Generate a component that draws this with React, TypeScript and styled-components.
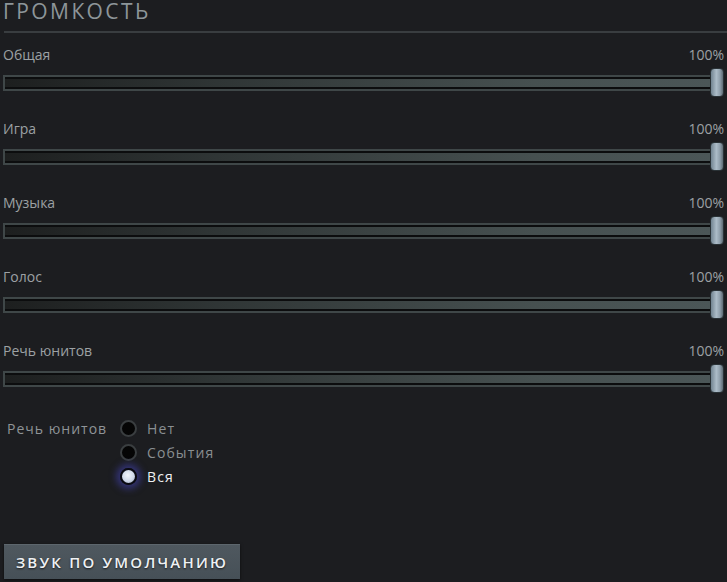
import React from "react";
import styled, { createGlobalStyle } from "styled-components";

const GlobalStyle = createGlobalStyle`
  html, body {
    margin: 0;
    padding: 0;
    background: #1c1d20;
  }
  body {
    font-family: "Open Sans", "Noto Sans", sans-serif;
    width: 727px;
    height: 582px;
    overflow: hidden;
  }
`;

const Page = styled.div`
  display: flex;
  flex-direction: column;
`;

const Header = styled.div`
  margin-left: 4px;
  height: 31px;
  border-bottom: 2px solid #393d40;
  display: flex;
  align-items: flex-start;
`;

const Title = styled.h1`
  margin: 0 0 0 -1px;
  font-size: 21px;
  font-weight: 400;
  letter-spacing: 2.4px;
  color: #8d9599;
  line-height: 22px;
`;

const Sliders = styled.div`
  display: flex;
  flex-direction: column;
  padding: 12px 3px 0 3px;
`;

const Row = styled.div`
  display: flex;
  flex-direction: column;
  height: 74px;
`;

const LabelLine = styled.div`
  display: flex;
  justify-content: space-between;
  align-items: center;
  height: 18px;
  font-size: 14px;
  color: #9ca1a4;
`;

const TrackArea = styled.div`
  position: relative;
  margin-top: 5px;
  height: 29px;
  display: flex;
  align-items: center;
`;

const Track = styled.div`
  flex: 1;
  height: 16px;
  box-sizing: border-box;
  border: 2px solid #3f4748;
  background: #0c0d0e;
  padding: 2px 0;
  margin-right: 12px;
`;

const Fill = styled.div`
  height: 100%;
  background: linear-gradient(90deg, #1d1f1f 0%, #2f3535 30%, #465050 75%, #4b5657 100%);
`;

const Thumb = styled.div`
  position: absolute;
  right: 0;
  top: 0;
  width: 14px;
  height: 29px;
  box-sizing: border-box;
  border-radius: 4px;
  border: 1px solid #2a3236;
  background: linear-gradient(90deg, #728491 0%, #acbcc8 45%, #8e9eaa 75%, #5e6b74 100%);
`;

const RadioSection = styled.div`
  display: flex;
  align-items: flex-start;
  margin-top: 1px;
  padding-left: 7px;
`;

const RadioLabel = styled.div`
  width: 113px;
  height: 24px;
  display: flex;
  align-items: center;
  font-size: 14px;
  letter-spacing: 1px;
  color: #8f9497;
`;

const Options = styled.div`
  display: flex;
  flex-direction: column;
`;

const Option = styled.div<{ $on?: boolean }>`
  display: flex;
  align-items: center;
  gap: 10px;
  height: 24px;
  font-size: 14px;
  letter-spacing: 1.1px;
  color: ${(p) => (p.$on ? "#eef0f2" : "#8a8f92")};
`;

const Dot = styled.span<{ $on?: boolean }>`
  width: 17px;
  height: 17px;
  box-sizing: border-box;
  border-radius: 50%;
  border: 2px solid ${(p) => (p.$on ? "#0a0a12" : "#3a3e40")};
  background: ${(p) =>
    p.$on ? "radial-gradient(circle at 45% 40%, #f2f5fb 0%, #cfd8e8 55%, #8e9ab4 100%)" : "#050505"};
  box-shadow: ${(p) => (p.$on ? "0 0 7px 4px rgba(72, 72, 200, 0.5)" : "none")};
`;

const ResetButton = styled.button`
  margin: 56px 0 0 4px;
  width: 236px;
  height: 35px;
  border: none;
  border-top: 1px solid #5d666d;
  background: linear-gradient(180deg, #4f585f 0%, #465057 100%);
  box-shadow: 0 1px 3px rgba(0, 0, 0, 0.6);
  color: #eef1f3;
  font-family: "Open Sans", "Noto Sans", sans-serif;
  font-size: 15px;
  font-weight: 600;
  letter-spacing: 2.2px;
  text-shadow: 0 1px 2px rgba(0, 0, 0, 0.7);
  padding: 0;
`;

const channels = ["Общая", "Игра", "Музыка", "Голос", "Речь юнитов"];
const speechOptions = [
  { label: "Нет", on: false },
  { label: "События", on: false },
  { label: "Вся", on: true },
];

const App = () => {
  return (
    <Page>
      <GlobalStyle />
      <Header>
        <Title>ГРОМКОСТЬ</Title>
      </Header>
      <Sliders>
        {channels.map((name) => (
          <Row key={name}>
            <LabelLine>
              <span>{name}</span>
              <span>100%</span>
            </LabelLine>
            <TrackArea>
              <Track>
                <Fill style={{ width: "100%" }} />
              </Track>
              <Thumb />
            </TrackArea>
          </Row>
        ))}
      </Sliders>
      <RadioSection>
        <RadioLabel>Речь юнитов</RadioLabel>
        <Options>
          {speechOptions.map((o) => (
            <Option key={o.label} $on={o.on}>
              <Dot $on={o.on} />
              {o.label}
            </Option>
          ))}
        </Options>
      </RadioSection>
      <ResetButton>ЗВУК ПО УМОЛЧАНИЮ</ResetButton>
    </Page>
  );
};

export default App;
